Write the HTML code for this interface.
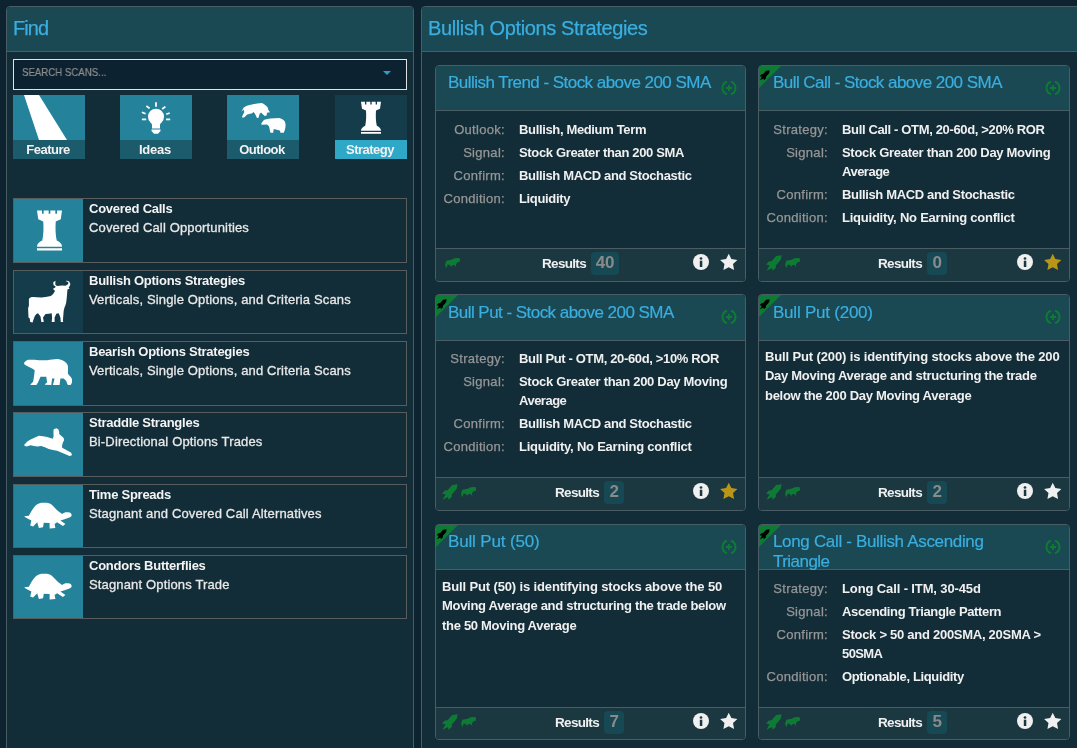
<!DOCTYPE html><html><head><meta charset="utf-8"><style>
html,body{margin:0;padding:0}
body{width:1077px;height:748px;overflow:hidden;background:#0d2330;position:relative;font-family:"Liberation Sans",sans-serif;}
.t{position:absolute;white-space:nowrap;will-change:transform;}
svg{display:block}
</style></head><body><div style="position:absolute;left:6px;top:6px;width:406px;height:760px;border:1px solid #4b5d64;border-radius:4px 4px 0 0;background:#122d38;"></div>
<div style="position:absolute;left:7px;top:7px;width:406px;height:44px;background:#1a4953;border-radius:3px 3px 0 0;"></div>
<div style="position:absolute;left:7px;top:51px;width:406px;height:1px;background:#4b5d64;"></div>
<div class="t" style="left:12.5px;top:16.07px;font-size:20px;line-height:24px;color:#3aaee0;font-weight:400;letter-spacing:-0.95px;-webkit-text-stroke:0.25px #3aaee0;">Find</div>
<div style="position:absolute;left:13px;top:59px;width:392px;height:29px;border:1px solid #dfe3e6;background:#0d2230;"></div>
<div class="t" style="left:22.2px;top:64.72px;font-size:11.5px;line-height:14px;color:#8f8f8f;font-weight:400;letter-spacing:0px;transform:scaleX(0.84);transform-origin:0 0;-webkit-text-stroke:0.2px #8f8f8f;">SEARCH SCANS...</div>
<svg style="position:absolute;left:383px;top:71px" width="8" height="4" viewBox="0 0 8 4"><path d="M0,0H8L4,4Z" fill="#2d9fc2"/></svg>
<div style="position:absolute;left:13px;top:95px;width:72px;height:45px;background:#24839b;"></div>
<div style="position:absolute;left:13px;top:140px;width:72px;height:19px;background:#1c5b6c;"></div>
<div class="t" style="left:-151.7px;width:400px;text-align:center;top:141.50px;font-size:13px;line-height:16px;color:#f2f2f2;font-weight:700;letter-spacing:-0.5px;">Feature</div>
<div style="position:absolute;left:120px;top:95px;width:72px;height:45px;background:#24839b;"></div>
<div style="position:absolute;left:120px;top:140px;width:72px;height:19px;background:#1c5b6c;"></div>
<div class="t" style="left:-44.69999999999999px;width:400px;text-align:center;top:141.50px;font-size:13px;line-height:16px;color:#f2f2f2;font-weight:700;letter-spacing:-0.2px;">Ideas</div>
<div style="position:absolute;left:227px;top:95px;width:72px;height:45px;background:#24839b;"></div>
<div style="position:absolute;left:227px;top:140px;width:72px;height:19px;background:#1c5b6c;"></div>
<div class="t" style="left:62.30000000000001px;width:400px;text-align:center;top:141.50px;font-size:13px;line-height:16px;color:#f2f2f2;font-weight:700;letter-spacing:-0.5px;">Outlook</div>
<div style="position:absolute;left:335px;top:95px;width:72px;height:45px;background:#143c4a;"></div>
<div style="position:absolute;left:335px;top:140px;width:72px;height:19px;background:#2fa7c7;"></div>
<div class="t" style="left:170.3px;width:400px;text-align:center;top:141.50px;font-size:13px;line-height:16px;color:#f2f2f2;font-weight:700;letter-spacing:-0.5px;">Strategy</div>
<svg style="position:absolute;left:13px;top:95px" width="72" height="45" viewBox="0 0 72 45"><path d="M11,0H26L54,45H26Z" fill="#fff"/></svg>
<svg style="position:absolute;left:120px;top:95px" width="72" height="45" viewBox="0 0 72 45"><g fill="#fff"><circle cx="36" cy="21.7" r="8"/><path d="M29.5,25.5Q31.5,28 32,29.7V33.6H40V29.7Q40.5,28 42.5,25.5Z"/><path d="M31.5,34.6H40.5V36L38,38.8H34L31.5,36Z"/></g><g stroke="#fff" stroke-width="1.75" stroke-linecap="butt"><path d="M36,7.3V11.8"/><path d="M26.4,11L29.6,13.4"/><path d="M45.4,11.6L42.2,14"/><path d="M21.9,17.2L25.6,18.8"/><path d="M49.7,18L46.2,19.3"/><path d="M21.9,24.4H26.2"/><path d="M46,24.4H50.2"/></g></svg>
<svg style="position:absolute;left:227px;top:95px" width="72" height="45" viewBox="0 0 72 45"><path fill="#fff" d="M14.3,16.8L16.6,12.7L18.4,11.4C19,10.9 19.8,10.6 20.7,10.4L25.9,9.3L30.3,8.4L34.8,8C36,8.5 37,9 37.8,9.7C39,10.5 39.8,11.2 40.4,11.9C40.9,13 41.2,14.1 41.5,15.3L43,17.3L40,17.7L39.6,20.5L37.8,21L36.3,19.7L34,17.5L32.6,19L31.4,23.1L30,23.1L28.1,19L26.6,17.1L25.1,18.2L20.3,19.4L17.3,22.3L15.5,22.7L15.1,21.6L17.3,17.1L16.6,14.5Z"/><path fill="#fff" d="M34.1,29.1C35,27.3 36,25.7 37.4,24.7C39.3,23.9 41.3,23.5 43.4,23.4L52.1,23.1C54.5,23.7 56.3,24.7 57.5,26.1C58.5,27.8 58.7,29.6 58.5,31.4C58.3,33.5 57.6,35.8 56.8,37.8L53.5,37.8L52.8,35.4L46.8,34.1L46.1,37.8L43.4,37.8L42.1,31.4L40.1,29.4L34.8,29.7Z"/></svg>
<svg style="position:absolute;left:335px;top:95px" width="72" height="45" viewBox="0 0 72 45"><g transform="translate(26,6.8)"><path fill="#fff" d="M0,0H4V2.6H5.33V0H9.33V2.6H10.67V0H14.67V2.6H16V0H20L19,7L15,8.8C14.6,14 14.8,20 15.8,24C18.6,25.2 20,26.8 20,29H0C0,26.8 1.4,25.2 4.2,24C5.2,20 5.4,14 5,8.8L1,7Z M0,30.2H20V32H0Z"/></g></svg>
<div style="position:absolute;left:13px;top:198px;width:392px;height:63px;border:1px solid #595c5c;background:#122d38;"></div>
<div style="position:absolute;left:14px;top:199px;width:69px;height:63px;background:#24839b;"></div>
<div class="t" style="left:89.2px;top:200.70px;font-size:13px;line-height:16px;color:#f4f4f4;font-weight:700;letter-spacing:-0.25px;">Covered Calls</div>
<div class="t" style="left:89.2px;top:220.30px;font-size:13px;line-height:16px;color:#e8e8e8;font-weight:400;letter-spacing:0.15px;-webkit-text-stroke:0.3px #e8e8e8;">Covered Call Opportunities</div>
<svg style="position:absolute;left:14px;top:199px" width="69" height="63" viewBox="0 0 69 63"><g transform="translate(23,11.5) scale(1.25)"><path fill="#fff" d="M0,0H4V2.6H5.33V0H9.33V2.6H10.67V0H14.67V2.6H16V0H20L19,7L15,8.8C14.6,14 14.8,20 15.8,24C18.6,25.2 20,26.8 20,29H0C0,26.8 1.4,25.2 4.2,24C5.2,20 5.4,14 5,8.8L1,7Z M0,30.2H20V32H0Z"/></g></svg>
<div style="position:absolute;left:13px;top:270px;width:392px;height:62px;border:1px solid #595c5c;background:#122d38;"></div>
<div style="position:absolute;left:14px;top:271px;width:69px;height:62px;background:#143c4a;"></div>
<div class="t" style="left:89.2px;top:272.70px;font-size:13px;line-height:16px;color:#f4f4f4;font-weight:700;letter-spacing:-0.25px;">Bullish Options Strategies</div>
<div class="t" style="left:89.2px;top:292.30px;font-size:13px;line-height:16px;color:#e8e8e8;font-weight:400;letter-spacing:0.15px;-webkit-text-stroke:0.3px #e8e8e8;">Verticals, Single Options, and Criteria Scans</div>
<svg style="position:absolute;left:14px;top:271px" width="69" height="63" viewBox="0 0 69 63"><path fill="#fff" d="M15.3,27.3C16.5,26.5 17.5,26.2 19,26.1L27.3,26.5C30,26.2 33,25.8 35.6,25.3C37,24.8 38.2,24 38.9,23.2C39.8,22 40.5,21 41,19.9L38.9,17.8L40.6,17L41.8,15.7C40.5,15 39.5,14.3 39.4,13.3C39.2,12 39.4,11 39.8,10.8L41.8,9.9C41.3,10.8 41.2,11.5 41.4,11.6C41.2,12.5 41.3,13.2 41.4,13.7C42,14.3 42.6,14.7 43.1,14.9L48.1,14.5L51.4,14.7C52.3,14.4 53.3,13.9 53.9,13.3C54.4,12.5 54.4,11.8 54.3,11.2L51.8,9.9C53.3,9.8 54.5,10 55.1,10.4C56,11.3 56.4,12.3 56.3,13.3C56.1,14.5 55.5,15.5 54.7,16.2L55.5,17.8L53.4,18.6C53.3,20.5 53.2,22.3 53,24C52.8,26.5 52.6,29 52.2,31.5C51.8,33.5 51.2,35 50.5,36.5L49.7,39.8L48.9,49.7L49.3,51L46.8,51L46.4,46.4L44.7,42.3L42.3,42.7L40.6,46.4L40.6,51L37.7,51L38.1,46.4L37.7,42.3L34.8,42.7L31.5,43.1L29,46.4L29.8,51L27.3,51L26.5,45.6L24,42.3L22.4,43.1L20.7,45.2L19.1,49.7L18.6,51.4L16.2,51L15.7,47.2L14.5,46.4L14.1,37.3L14.9,34.8L14.9,28.2Z"/></svg>
<div style="position:absolute;left:13px;top:341px;width:392px;height:63px;border:1px solid #595c5c;background:#122d38;"></div>
<div style="position:absolute;left:14px;top:342px;width:69px;height:63px;background:#24839b;"></div>
<div class="t" style="left:89.2px;top:343.70px;font-size:13px;line-height:16px;color:#f4f4f4;font-weight:700;letter-spacing:-0.25px;">Bearish Options Strategies</div>
<div class="t" style="left:89.2px;top:363.30px;font-size:13px;line-height:16px;color:#e8e8e8;font-weight:400;letter-spacing:0.15px;-webkit-text-stroke:0.3px #e8e8e8;">Verticals, Single Options, and Criteria Scans</div>
<svg style="position:absolute;left:14px;top:342px" width="69" height="63" viewBox="0 0 69 63"><path fill="#fff" d="M9.9,21.1C11,19.5 12.5,18 14.1,17.8L20.7,17.8C25,18.3 29,18.5 33.1,18.2C37,17.8 40,17 43.1,17C46,17.2 48,18 49.7,19.1C52,20.5 53.5,22 53.9,24C54.2,27 53.8,29.5 53.9,31.5C54.5,33 56,34.2 57.2,35.6C58.2,37 58.2,39 58,39.8C57.8,41.5 57,43 56.3,43.1L53.9,43.1C53,41.5 52.8,40 52.2,38.9L49.7,36.5L46.4,36.5L45.6,43.1L38.9,43.1C39.5,41 40,38.5 40.6,36.5L38.1,36.5L37.3,43.1L30.7,42.7C31.5,41.8 32.5,41 33.1,40.6L32.3,34.8L26.5,34.8L24,40.6L22.4,43.1L16.2,43.1C17,41.8 18.2,40.8 19.1,39.8C20,35 20.5,31 20.7,28.2C19.2,27 18,26.2 16.6,25.7C14.5,24.8 12.5,23.8 10.8,22.8Z"/></svg>
<div style="position:absolute;left:13px;top:412px;width:392px;height:63px;border:1px solid #595c5c;background:#122d38;"></div>
<div style="position:absolute;left:14px;top:413px;width:69px;height:63px;background:#24839b;"></div>
<div class="t" style="left:89.2px;top:414.70px;font-size:13px;line-height:16px;color:#f4f4f4;font-weight:700;letter-spacing:-0.25px;">Straddle Strangles</div>
<div class="t" style="left:89.2px;top:434.30px;font-size:13px;line-height:16px;color:#e8e8e8;font-weight:400;letter-spacing:0.15px;-webkit-text-stroke:0.3px #e8e8e8;">Bi-Directional Options Trades</div>
<svg style="position:absolute;left:14px;top:413px" width="69" height="63" viewBox="0 0 69 63"><path fill="#fff" d="M10.4,31.5L13.3,28.6L16.6,26.5L19.9,24.9L24.9,22.8L29.0,23.2L33.1,24.0L38.9,25.7L39.6,23.2L39.4,18.2L39.8,16.2L42.3,15.3L44.3,16.2L45.2,19.1L45.2,21.1L47.2,22.8L49.7,24.9L50.1,27.3L48.9,29.4L48.1,32.3L48.1,34.8L51.4,36.5L57.2,39.8L58.0,42.3L55.5,43.1L49.7,40.6L43.1,37.7L38.9,36.9L34.8,36.0L31.5,34.4L27.3,33.1L23.2,33.6L19.9,33.1L16.6,32.3L12.4,33.6L10.4,32.7Z"/></svg>
<div style="position:absolute;left:13px;top:484px;width:392px;height:62px;border:1px solid #595c5c;background:#122d38;"></div>
<div style="position:absolute;left:14px;top:485px;width:69px;height:62px;background:#24839b;"></div>
<div class="t" style="left:89.2px;top:486.70px;font-size:13px;line-height:16px;color:#f4f4f4;font-weight:700;letter-spacing:-0.25px;">Time Spreads</div>
<div class="t" style="left:89.2px;top:506.30px;font-size:13px;line-height:16px;color:#e8e8e8;font-weight:400;letter-spacing:0.15px;-webkit-text-stroke:0.3px #e8e8e8;">Stagnant and Covered Call Alternatives</div>
<svg style="position:absolute;left:14px;top:485px" width="69" height="63" viewBox="0 0 69 63"><path fill="#fff" d="M10.4,31.3L14.9,30.7C16.5,27.5 18.5,24 20.7,21.5C22.5,19.5 25,18 27.3,17.8L33.1,17.8C35.5,18.3 37.5,19.3 38.9,20.7C40.8,22.8 42.8,25 44.7,26.5L48.1,29C49.2,28.2 50.2,27.6 51.4,27.3C53,27.2 54.8,27.3 56.3,27.8C57.3,28.5 57.7,29.6 57.6,30.7C57,31.8 55.8,32.4 54.7,32.7C52,33.6 49,34.6 46.4,35.6L51.4,38.9L48.9,41L43.1,37.3L40.6,38.9L41.4,43.1L35.6,43.5L35.6,38.1L29.8,37.7L29,42.3L24.9,43.1L23.2,37.3L19.1,41.4L16.2,40.6L17.4,35.6C15,34.3 12.8,33 10.8,31.9Z"/></svg>
<div style="position:absolute;left:13px;top:555px;width:392px;height:62px;border:1px solid #595c5c;background:#122d38;"></div>
<div style="position:absolute;left:14px;top:556px;width:69px;height:62px;background:#24839b;"></div>
<div class="t" style="left:89.2px;top:557.70px;font-size:13px;line-height:16px;color:#f4f4f4;font-weight:700;letter-spacing:-0.25px;">Condors Butterflies</div>
<div class="t" style="left:89.2px;top:577.30px;font-size:13px;line-height:16px;color:#e8e8e8;font-weight:400;letter-spacing:0.15px;-webkit-text-stroke:0.3px #e8e8e8;">Stagnant Options Trade</div>
<svg style="position:absolute;left:14px;top:556px" width="69" height="63" viewBox="0 0 69 63"><path fill="#fff" d="M10.4,31.3L14.9,30.7C16.5,27.5 18.5,24 20.7,21.5C22.5,19.5 25,18 27.3,17.8L33.1,17.8C35.5,18.3 37.5,19.3 38.9,20.7C40.8,22.8 42.8,25 44.7,26.5L48.1,29C49.2,28.2 50.2,27.6 51.4,27.3C53,27.2 54.8,27.3 56.3,27.8C57.3,28.5 57.7,29.6 57.6,30.7C57,31.8 55.8,32.4 54.7,32.7C52,33.6 49,34.6 46.4,35.6L51.4,38.9L48.9,41L43.1,37.3L40.6,38.9L41.4,43.1L35.6,43.5L35.6,38.1L29.8,37.7L29,42.3L24.9,43.1L23.2,37.3L19.1,41.4L16.2,40.6L17.4,35.6C15,34.3 12.8,33 10.8,31.9Z"/></svg>
<div style="position:absolute;left:421px;top:6px;width:700px;height:760px;border:1px solid #4b5d64;border-radius:4px 4px 0 0;background:#122d38;"></div>
<div style="position:absolute;left:422px;top:7px;width:700px;height:44px;background:#1a4953;border-radius:3px 0 0 0;"></div>
<div style="position:absolute;left:422px;top:51px;width:700px;height:1px;background:#4b5d64;"></div>
<div class="t" style="left:427.5px;top:16.07px;font-size:20px;line-height:24px;color:#3aaee0;font-weight:400;letter-spacing:-0.37px;-webkit-text-stroke:0.25px #3aaee0;">Bullish Options Strategies</div>
<div style="position:absolute;left:435px;top:65px;width:309px;height:215px;border:1px solid #4b5d64;border-radius:4px;overflow:hidden;background:#122d38;"><div style="position:absolute;left:0;top:0;width:309px;height:44px;background:#1a4953;border-bottom:1px solid #4b5d64;"></div><div style="position:absolute;left:0;top:182px;width:309px;height:33px;background:#1b3740;border-top:1px solid #4b5d64;"></div></div>
<div class="t" style="left:448.0px;top:73.11px;font-size:17px;line-height:20px;color:#3aaee0;font-weight:400;letter-spacing:-0.54px;-webkit-text-stroke:0.2px #3aaee0;">Bullish Trend - Stock above 200 SMA</div>
<svg style="position:absolute;left:720.4px;top:79.2px" width="18" height="18" viewBox="0 0 18 18"><g fill="none" stroke="#0e7b34" stroke-width="2"><path d="M7,2.82A6.5,6.5 0 0 0 7,15.18"/><path d="M11,2.82A6.5,6.5 0 0 1 11,15.18"/><path d="M9,6V12M6,9H12" stroke-width="1.8"/></g></svg>
<div class="t" style="left:104.80000000000001px;width:400px;text-align:right;top:121.50px;font-size:13px;line-height:16px;color:#969696;font-weight:400;letter-spacing:0.3px;-webkit-text-stroke:0.25px #969696;">Outlook:</div>
<div class="t" style="left:518.7px;top:121.50px;font-size:13px;line-height:16px;color:#f0f0f0;font-weight:700;letter-spacing:-0.35px;">Bullish, Medium Term</div>
<div class="t" style="left:104.80000000000001px;width:400px;text-align:right;top:144.50px;font-size:13px;line-height:16px;color:#969696;font-weight:400;letter-spacing:0.3px;-webkit-text-stroke:0.25px #969696;">Signal:</div>
<div class="t" style="left:518.7px;top:144.50px;font-size:13px;line-height:16px;color:#f0f0f0;font-weight:700;letter-spacing:-0.35px;">Stock Greater than 200 SMA</div>
<div class="t" style="left:104.80000000000001px;width:400px;text-align:right;top:167.50px;font-size:13px;line-height:16px;color:#969696;font-weight:400;letter-spacing:0.3px;-webkit-text-stroke:0.25px #969696;">Confirm:</div>
<div class="t" style="left:518.7px;top:167.50px;font-size:13px;line-height:16px;color:#f0f0f0;font-weight:700;letter-spacing:-0.35px;">Bullish MACD and Stochastic</div>
<div class="t" style="left:104.80000000000001px;width:400px;text-align:right;top:190.50px;font-size:13px;line-height:16px;color:#969696;font-weight:400;letter-spacing:0.3px;-webkit-text-stroke:0.25px #969696;">Condition:</div>
<div class="t" style="left:518.7px;top:190.50px;font-size:13px;line-height:16px;color:#f0f0f0;font-weight:700;letter-spacing:-0.35px;">Liquidity</div>
<svg style="position:absolute;left:441.6px;top:253.7px" width="20" height="16" viewBox="0 0 20 16"><path fill="#0e7b34" d="M4.3,6.7L9.6,5.8L12.5,4.3L16.4,4.1L17.3,3.9L18.1,5.8L17.8,7.7L15.7,8.2L14.5,9.6L13.7,11.3L14.7,12.3L13.5,12.5L12.5,11.1L10.1,11.3L9.6,12.5L8.9,12.5L7.5,10.8L5.5,10.8L4.8,13.5L3.9,13.5L3.1,10.6L3.9,8Z"/></svg>
<div class="t" style="left:542px;top:256.32px;font-size:13.5px;line-height:16px;color:#f0f0f0;font-weight:700;letter-spacing:-0.68px;">Results</div>
<div style="position:absolute;left:591px;top:252px;width:28px;height:23px;background:#174955;border-radius:4px;"></div>
<div class="t" style="left:405.0px;width:400px;text-align:center;top:253.11px;font-size:17px;line-height:20px;color:#8a8a8a;font-weight:700;letter-spacing:-0.3px;">40</div>
<svg style="position:absolute;left:693px;top:254px" width="16" height="16" viewBox="0 0 16 16"><circle cx="8" cy="8" r="8" fill="#f0f0f0"/><circle cx="8" cy="4.5" r="1.35" fill="#1b3740"/><rect x="6.8" y="6.7" width="2.5" height="6.3" fill="#1b3740"/></svg>
<svg style="position:absolute;left:720.3px;top:253.1px" width="17.5" height="17.5" viewBox="0 0 16 16"><path fill="#f0f0f0" d="M8.00,0.60L10.41,5.58L15.89,6.34L11.90,10.17L12.88,15.61L8.00,13.00L3.12,15.61L4.10,10.17L0.11,6.34L5.59,5.58Z"/></svg>
<div style="position:absolute;left:758px;top:65px;width:310px;height:215px;border:1px solid #4b5d64;border-radius:4px;overflow:hidden;background:#122d38;"><div style="position:absolute;left:0;top:0;width:310px;height:44px;background:#1a4953;border-bottom:1px solid #4b5d64;"></div><div style="position:absolute;left:0;top:182px;width:310px;height:33px;background:#1b3740;border-top:1px solid #4b5d64;"></div></div>
<svg style="position:absolute;left:759px;top:66px" width="22" height="22" viewBox="0 0 22 22"><path d="M0,0H22L0,22Z" fill="#0e7b34"/><g transform="translate(-3.2,-0.4) scale(0.64)"><path fill="#000" d="M21.6,7.2L20.9,11.6C19.2,13.8 17.5,15.8 15.8,17.6L15.8,20L12.5,22.7L12.1,20L6.5,22.7L9.5,17.5L6,16.5L8.8,13.5L11.6,13.2C13.2,11.3 14.7,9.6 16.2,8.1Z"/></g></svg>
<div class="t" style="left:772.5px;top:73.11px;font-size:17px;line-height:20px;color:#3aaee0;font-weight:400;letter-spacing:-0.54px;-webkit-text-stroke:0.2px #3aaee0;">Bull Call - Stock above 200 SMA</div>
<svg style="position:absolute;left:1044.4px;top:79.2px" width="18" height="18" viewBox="0 0 18 18"><g fill="none" stroke="#0e7b34" stroke-width="2"><path d="M7,2.82A6.5,6.5 0 0 0 7,15.18"/><path d="M11,2.82A6.5,6.5 0 0 1 11,15.18"/><path d="M9,6V12M6,9H12" stroke-width="1.8"/></g></svg>
<div class="t" style="left:427.79999999999995px;width:400px;text-align:right;top:121.50px;font-size:13px;line-height:16px;color:#969696;font-weight:400;letter-spacing:0.3px;-webkit-text-stroke:0.25px #969696;">Strategy:</div>
<div class="t" style="left:841.7px;top:121.50px;font-size:13px;line-height:16px;color:#f0f0f0;font-weight:700;letter-spacing:-0.35px;">Bull Call - OTM, 20-60d, &gt;20% ROR</div>
<div class="t" style="left:427.79999999999995px;width:400px;text-align:right;top:144.50px;font-size:13px;line-height:16px;color:#969696;font-weight:400;letter-spacing:0.3px;-webkit-text-stroke:0.25px #969696;">Signal:</div>
<div class="t" style="left:841.7px;top:144.50px;font-size:13px;line-height:16px;color:#f0f0f0;font-weight:700;letter-spacing:-0.3px;">Stock Greater than 200 Day Moving</div>
<div class="t" style="left:841.7px;top:164.00px;font-size:13px;line-height:16px;color:#f0f0f0;font-weight:700;letter-spacing:-0.5px;">Average</div>
<div class="t" style="left:427.79999999999995px;width:400px;text-align:right;top:187.00px;font-size:13px;line-height:16px;color:#969696;font-weight:400;letter-spacing:0.3px;-webkit-text-stroke:0.25px #969696;">Confirm:</div>
<div class="t" style="left:841.7px;top:187.00px;font-size:13px;line-height:16px;color:#f0f0f0;font-weight:700;letter-spacing:-0.35px;">Bullish MACD and Stochastic</div>
<div class="t" style="left:427.79999999999995px;width:400px;text-align:right;top:210.00px;font-size:13px;line-height:16px;color:#969696;font-weight:400;letter-spacing:0.3px;-webkit-text-stroke:0.25px #969696;">Condition:</div>
<div class="t" style="left:841.7px;top:210.00px;font-size:13px;line-height:16px;color:#f0f0f0;font-weight:700;letter-spacing:-0.22999999999999998px;">Liquidity, No Earning conflict</div>
<svg style="position:absolute;left:760px;top:248px" width="22" height="26" viewBox="0 0 22 26"><path fill="#0e7b34" d="M21.6,7.2L20.9,11.6C19.2,13.8 17.5,15.8 15.8,17.6L15.8,20L12.5,22.7L12.1,20L6.5,22.7L9.5,17.5L6,16.5L8.8,13.5L11.6,13.2C13.2,11.3 14.7,9.6 16.2,8.1Z"/></svg>
<svg style="position:absolute;left:782.3px;top:254px" width="20" height="16" viewBox="0 0 20 16"><path fill="#0e7b34" d="M4.3,6.7L9.6,5.8L12.5,4.3L16.4,4.1L17.3,3.9L18.1,5.8L17.8,7.7L15.7,8.2L14.5,9.6L13.7,11.3L14.7,12.3L13.5,12.5L12.5,11.1L10.1,11.3L9.6,12.5L8.9,12.5L7.5,10.8L5.5,10.8L4.8,13.5L3.9,13.5L3.1,10.6L3.9,8Z"/></svg>
<div class="t" style="left:878px;top:256.32px;font-size:13.5px;line-height:16px;color:#f0f0f0;font-weight:700;letter-spacing:-0.68px;">Results</div>
<div style="position:absolute;left:927px;top:252px;width:19.5px;height:23px;background:#174955;border-radius:4px;"></div>
<div class="t" style="left:736.75px;width:400px;text-align:center;top:253.11px;font-size:17px;line-height:20px;color:#8a8a8a;font-weight:700;letter-spacing:-0.3px;">0</div>
<svg style="position:absolute;left:1017px;top:254px" width="16" height="16" viewBox="0 0 16 16"><circle cx="8" cy="8" r="8" fill="#f0f0f0"/><circle cx="8" cy="4.5" r="1.35" fill="#1b3740"/><rect x="6.8" y="6.7" width="2.5" height="6.3" fill="#1b3740"/></svg>
<svg style="position:absolute;left:1044.3px;top:253.1px" width="17.5" height="17.5" viewBox="0 0 16 16"><path fill="#b99618" d="M8.00,0.60L10.41,5.58L15.89,6.34L11.90,10.17L12.88,15.61L8.00,13.00L3.12,15.61L4.10,10.17L0.11,6.34L5.59,5.58Z"/></svg>
<div style="position:absolute;left:435px;top:294px;width:309px;height:215px;border:1px solid #4b5d64;border-radius:4px;overflow:hidden;background:#122d38;"><div style="position:absolute;left:0;top:0;width:309px;height:45px;background:#1a4953;border-bottom:1px solid #4b5d64;"></div><div style="position:absolute;left:0;top:182px;width:309px;height:33px;background:#1b3740;border-top:1px solid #4b5d64;"></div></div>
<svg style="position:absolute;left:436px;top:295px" width="22" height="22" viewBox="0 0 22 22"><path d="M0,0H22L0,22Z" fill="#0e7b34"/><g transform="translate(-3.2,-0.4) scale(0.64)"><path fill="#000" d="M21.6,7.2L20.9,11.6C19.2,13.8 17.5,15.8 15.8,17.6L15.8,20L12.5,22.7L12.1,20L6.5,22.7L9.5,17.5L6,16.5L8.8,13.5L11.6,13.2C13.2,11.3 14.7,9.6 16.2,8.1Z"/></g></svg>
<div class="t" style="left:448.0px;top:302.61px;font-size:17px;line-height:20px;color:#3aaee0;font-weight:400;letter-spacing:-0.54px;-webkit-text-stroke:0.2px #3aaee0;">Bull Put - Stock above 200 SMA</div>
<svg style="position:absolute;left:720.4px;top:308.2px" width="18" height="18" viewBox="0 0 18 18"><g fill="none" stroke="#0e7b34" stroke-width="2"><path d="M7,2.82A6.5,6.5 0 0 0 7,15.18"/><path d="M11,2.82A6.5,6.5 0 0 1 11,15.18"/><path d="M9,6V12M6,9H12" stroke-width="1.8"/></g></svg>
<div class="t" style="left:104.80000000000001px;width:400px;text-align:right;top:350.50px;font-size:13px;line-height:16px;color:#969696;font-weight:400;letter-spacing:0.3px;-webkit-text-stroke:0.25px #969696;">Strategy:</div>
<div class="t" style="left:518.7px;top:350.50px;font-size:13px;line-height:16px;color:#f0f0f0;font-weight:700;letter-spacing:-0.35px;">Bull Put - OTM, 20-60d, &gt;10% ROR</div>
<div class="t" style="left:104.80000000000001px;width:400px;text-align:right;top:373.50px;font-size:13px;line-height:16px;color:#969696;font-weight:400;letter-spacing:0.3px;-webkit-text-stroke:0.25px #969696;">Signal:</div>
<div class="t" style="left:518.7px;top:373.50px;font-size:13px;line-height:16px;color:#f0f0f0;font-weight:700;letter-spacing:-0.3px;">Stock Greater than 200 Day Moving</div>
<div class="t" style="left:518.7px;top:393.00px;font-size:13px;line-height:16px;color:#f0f0f0;font-weight:700;letter-spacing:-0.5px;">Average</div>
<div class="t" style="left:104.80000000000001px;width:400px;text-align:right;top:416.00px;font-size:13px;line-height:16px;color:#969696;font-weight:400;letter-spacing:0.3px;-webkit-text-stroke:0.25px #969696;">Confirm:</div>
<div class="t" style="left:518.7px;top:416.00px;font-size:13px;line-height:16px;color:#f0f0f0;font-weight:700;letter-spacing:-0.35px;">Bullish MACD and Stochastic</div>
<div class="t" style="left:104.80000000000001px;width:400px;text-align:right;top:439.00px;font-size:13px;line-height:16px;color:#969696;font-weight:400;letter-spacing:0.3px;-webkit-text-stroke:0.25px #969696;">Condition:</div>
<div class="t" style="left:518.7px;top:439.00px;font-size:13px;line-height:16px;color:#f0f0f0;font-weight:700;letter-spacing:-0.22999999999999998px;">Liquidity, No Earning conflict</div>
<svg style="position:absolute;left:436px;top:477px" width="22" height="26" viewBox="0 0 22 26"><path fill="#0e7b34" d="M21.6,7.2L20.9,11.6C19.2,13.8 17.5,15.8 15.8,17.6L15.8,20L12.5,22.7L12.1,20L6.5,22.7L9.5,17.5L6,16.5L8.8,13.5L11.6,13.2C13.2,11.3 14.7,9.6 16.2,8.1Z"/></svg>
<svg style="position:absolute;left:458.0px;top:483px" width="20" height="16" viewBox="0 0 20 16"><path fill="#0e7b34" d="M4.3,6.7L9.6,5.8L12.5,4.3L16.4,4.1L17.3,3.9L18.1,5.8L17.8,7.7L15.7,8.2L14.5,9.6L13.7,11.3L14.7,12.3L13.5,12.5L12.5,11.1L10.1,11.3L9.6,12.5L8.9,12.5L7.5,10.8L5.5,10.8L4.8,13.5L3.9,13.5L3.1,10.6L3.9,8Z"/></svg>
<div class="t" style="left:555px;top:485.32px;font-size:13.5px;line-height:16px;color:#f0f0f0;font-weight:700;letter-spacing:-0.68px;">Results</div>
<div style="position:absolute;left:604px;top:481px;width:19.5px;height:23px;background:#174955;border-radius:4px;"></div>
<div class="t" style="left:413.75px;width:400px;text-align:center;top:482.11px;font-size:17px;line-height:20px;color:#8a8a8a;font-weight:700;letter-spacing:-0.3px;">2</div>
<svg style="position:absolute;left:693px;top:483px" width="16" height="16" viewBox="0 0 16 16"><circle cx="8" cy="8" r="8" fill="#f0f0f0"/><circle cx="8" cy="4.5" r="1.35" fill="#1b3740"/><rect x="6.8" y="6.7" width="2.5" height="6.3" fill="#1b3740"/></svg>
<svg style="position:absolute;left:720.3px;top:482.1px" width="17.5" height="17.5" viewBox="0 0 16 16"><path fill="#b99618" d="M8.00,0.60L10.41,5.58L15.89,6.34L11.90,10.17L12.88,15.61L8.00,13.00L3.12,15.61L4.10,10.17L0.11,6.34L5.59,5.58Z"/></svg>
<div style="position:absolute;left:758px;top:294px;width:310px;height:215px;border:1px solid #4b5d64;border-radius:4px;overflow:hidden;background:#122d38;"><div style="position:absolute;left:0;top:0;width:310px;height:45px;background:#1a4953;border-bottom:1px solid #4b5d64;"></div><div style="position:absolute;left:0;top:182px;width:310px;height:33px;background:#1b3740;border-top:1px solid #4b5d64;"></div></div>
<svg style="position:absolute;left:759px;top:295px" width="22" height="22" viewBox="0 0 22 22"><path d="M0,0H22L0,22Z" fill="#0e7b34"/><g transform="translate(-3.2,-0.4) scale(0.64)"><path fill="#000" d="M21.6,7.2L20.9,11.6C19.2,13.8 17.5,15.8 15.8,17.6L15.8,20L12.5,22.7L12.1,20L6.5,22.7L9.5,17.5L6,16.5L8.8,13.5L11.6,13.2C13.2,11.3 14.7,9.6 16.2,8.1Z"/></g></svg>
<div class="t" style="left:772.5px;top:302.61px;font-size:17px;line-height:20px;color:#3aaee0;font-weight:400;letter-spacing:-0.23000000000000004px;-webkit-text-stroke:0.2px #3aaee0;">Bull Put (200)</div>
<svg style="position:absolute;left:1044.4px;top:308.2px" width="18" height="18" viewBox="0 0 18 18"><g fill="none" stroke="#0e7b34" stroke-width="2"><path d="M7,2.82A6.5,6.5 0 0 0 7,15.18"/><path d="M11,2.82A6.5,6.5 0 0 1 11,15.18"/><path d="M9,6V12M6,9H12" stroke-width="1.8"/></g></svg>
<div class="t" style="left:765.3px;top:348.50px;font-size:13px;line-height:16px;color:#f0f0f0;font-weight:700;letter-spacing:-0.135px;">Bull Put (200) is identifying stocks above the 200</div>
<div class="t" style="left:765.3px;top:368.00px;font-size:13px;line-height:16px;color:#f0f0f0;font-weight:700;letter-spacing:-0.28900000000000003px;">Day Moving Average and structuring the trade</div>
<div class="t" style="left:765.3px;top:387.50px;font-size:13px;line-height:16px;color:#f0f0f0;font-weight:700;letter-spacing:-0.29400000000000004px;">below the 200 Day Moving Average</div>
<svg style="position:absolute;left:760px;top:477px" width="22" height="26" viewBox="0 0 22 26"><path fill="#0e7b34" d="M21.6,7.2L20.9,11.6C19.2,13.8 17.5,15.8 15.8,17.6L15.8,20L12.5,22.7L12.1,20L6.5,22.7L9.5,17.5L6,16.5L8.8,13.5L11.6,13.2C13.2,11.3 14.7,9.6 16.2,8.1Z"/></svg>
<svg style="position:absolute;left:782.3px;top:483px" width="20" height="16" viewBox="0 0 20 16"><path fill="#0e7b34" d="M4.3,6.7L9.6,5.8L12.5,4.3L16.4,4.1L17.3,3.9L18.1,5.8L17.8,7.7L15.7,8.2L14.5,9.6L13.7,11.3L14.7,12.3L13.5,12.5L12.5,11.1L10.1,11.3L9.6,12.5L8.9,12.5L7.5,10.8L5.5,10.8L4.8,13.5L3.9,13.5L3.1,10.6L3.9,8Z"/></svg>
<div class="t" style="left:878px;top:485.32px;font-size:13.5px;line-height:16px;color:#f0f0f0;font-weight:700;letter-spacing:-0.68px;">Results</div>
<div style="position:absolute;left:927px;top:481px;width:19.5px;height:23px;background:#174955;border-radius:4px;"></div>
<div class="t" style="left:736.75px;width:400px;text-align:center;top:482.11px;font-size:17px;line-height:20px;color:#8a8a8a;font-weight:700;letter-spacing:-0.3px;">2</div>
<svg style="position:absolute;left:1017px;top:483px" width="16" height="16" viewBox="0 0 16 16"><circle cx="8" cy="8" r="8" fill="#f0f0f0"/><circle cx="8" cy="4.5" r="1.35" fill="#1b3740"/><rect x="6.8" y="6.7" width="2.5" height="6.3" fill="#1b3740"/></svg>
<svg style="position:absolute;left:1044.3px;top:482.1px" width="17.5" height="17.5" viewBox="0 0 16 16"><path fill="#f0f0f0" d="M8.00,0.60L10.41,5.58L15.89,6.34L11.90,10.17L12.88,15.61L8.00,13.00L3.12,15.61L4.10,10.17L0.11,6.34L5.59,5.58Z"/></svg>
<div style="position:absolute;left:435px;top:524px;width:309px;height:214px;border:1px solid #4b5d64;border-radius:4px;overflow:hidden;background:#122d38;"><div style="position:absolute;left:0;top:0;width:309px;height:44px;background:#1a4953;border-bottom:1px solid #4b5d64;"></div><div style="position:absolute;left:0;top:182px;width:309px;height:32px;background:#1b3740;border-top:1px solid #4b5d64;"></div></div>
<svg style="position:absolute;left:436px;top:525px" width="22" height="22" viewBox="0 0 22 22"><path d="M0,0H22L0,22Z" fill="#0e7b34"/><g transform="translate(-3.2,-0.4) scale(0.64)"><path fill="#000" d="M21.6,7.2L20.9,11.6C19.2,13.8 17.5,15.8 15.8,17.6L15.8,20L12.5,22.7L12.1,20L6.5,22.7L9.5,17.5L6,16.5L8.8,13.5L11.6,13.2C13.2,11.3 14.7,9.6 16.2,8.1Z"/></g></svg>
<div class="t" style="left:448.0px;top:532.11px;font-size:17px;line-height:20px;color:#3aaee0;font-weight:400;letter-spacing:-0.15000000000000002px;-webkit-text-stroke:0.2px #3aaee0;">Bull Put (50)</div>
<svg style="position:absolute;left:720.4px;top:538.2px" width="18" height="18" viewBox="0 0 18 18"><g fill="none" stroke="#0e7b34" stroke-width="2"><path d="M7,2.82A6.5,6.5 0 0 0 7,15.18"/><path d="M11,2.82A6.5,6.5 0 0 1 11,15.18"/><path d="M9,6V12M6,9H12" stroke-width="1.8"/></g></svg>
<div class="t" style="left:441.5px;top:578.50px;font-size:13px;line-height:16px;color:#f0f0f0;font-weight:700;letter-spacing:-0.14px;">Bull Put (50) is identifying stocks above the 50</div>
<div class="t" style="left:441.5px;top:598.00px;font-size:13px;line-height:16px;color:#f0f0f0;font-weight:700;letter-spacing:-0.29400000000000004px;">Moving Average and structuring the trade below</div>
<div class="t" style="left:441.5px;top:617.50px;font-size:13px;line-height:16px;color:#f0f0f0;font-weight:700;letter-spacing:-0.30000000000000004px;">the 50 Moving Average</div>
<svg style="position:absolute;left:436px;top:707px" width="22" height="26" viewBox="0 0 22 26"><path fill="#0e7b34" d="M21.6,7.2L20.9,11.6C19.2,13.8 17.5,15.8 15.8,17.6L15.8,20L12.5,22.7L12.1,20L6.5,22.7L9.5,17.5L6,16.5L8.8,13.5L11.6,13.2C13.2,11.3 14.7,9.6 16.2,8.1Z"/></svg>
<svg style="position:absolute;left:458.0px;top:713px" width="20" height="16" viewBox="0 0 20 16"><path fill="#0e7b34" d="M4.3,6.7L9.6,5.8L12.5,4.3L16.4,4.1L17.3,3.9L18.1,5.8L17.8,7.7L15.7,8.2L14.5,9.6L13.7,11.3L14.7,12.3L13.5,12.5L12.5,11.1L10.1,11.3L9.6,12.5L8.9,12.5L7.5,10.8L5.5,10.8L4.8,13.5L3.9,13.5L3.1,10.6L3.9,8Z"/></svg>
<div class="t" style="left:555px;top:715.32px;font-size:13.5px;line-height:16px;color:#f0f0f0;font-weight:700;letter-spacing:-0.68px;">Results</div>
<div style="position:absolute;left:604px;top:711px;width:19.5px;height:23px;background:#174955;border-radius:4px;"></div>
<div class="t" style="left:413.75px;width:400px;text-align:center;top:712.11px;font-size:17px;line-height:20px;color:#8a8a8a;font-weight:700;letter-spacing:-0.3px;">7</div>
<svg style="position:absolute;left:693px;top:713px" width="16" height="16" viewBox="0 0 16 16"><circle cx="8" cy="8" r="8" fill="#f0f0f0"/><circle cx="8" cy="4.5" r="1.35" fill="#1b3740"/><rect x="6.8" y="6.7" width="2.5" height="6.3" fill="#1b3740"/></svg>
<svg style="position:absolute;left:720.3px;top:712.1px" width="17.5" height="17.5" viewBox="0 0 16 16"><path fill="#f0f0f0" d="M8.00,0.60L10.41,5.58L15.89,6.34L11.90,10.17L12.88,15.61L8.00,13.00L3.12,15.61L4.10,10.17L0.11,6.34L5.59,5.58Z"/></svg>
<div style="position:absolute;left:758px;top:524px;width:310px;height:214px;border:1px solid #4b5d64;border-radius:4px;overflow:hidden;background:#122d38;"><div style="position:absolute;left:0;top:0;width:310px;height:44px;background:#1a4953;border-bottom:1px solid #4b5d64;"></div><div style="position:absolute;left:0;top:182px;width:310px;height:32px;background:#1b3740;border-top:1px solid #4b5d64;"></div></div>
<svg style="position:absolute;left:759px;top:525px" width="22" height="22" viewBox="0 0 22 22"><path d="M0,0H22L0,22Z" fill="#0e7b34"/><g transform="translate(-3.2,-0.4) scale(0.64)"><path fill="#000" d="M21.6,7.2L20.9,11.6C19.2,13.8 17.5,15.8 15.8,17.6L15.8,20L12.5,22.7L12.1,20L6.5,22.7L9.5,17.5L6,16.5L8.8,13.5L11.6,13.2C13.2,11.3 14.7,9.6 16.2,8.1Z"/></g></svg>
<div class="t" style="left:772.5px;top:532.11px;font-size:17px;line-height:20px;color:#3aaee0;font-weight:400;letter-spacing:-0.33000000000000007px;-webkit-text-stroke:0.2px #3aaee0;">Long Call - Bullish Ascending</div>
<div class="t" style="left:772.5px;top:552.11px;font-size:17px;line-height:20px;color:#3aaee0;font-weight:400;letter-spacing:-0.54px;-webkit-text-stroke:0.2px #3aaee0;">Triangle</div>
<svg style="position:absolute;left:1044.4px;top:538.2px" width="18" height="18" viewBox="0 0 18 18"><g fill="none" stroke="#0e7b34" stroke-width="2"><path d="M7,2.82A6.5,6.5 0 0 0 7,15.18"/><path d="M11,2.82A6.5,6.5 0 0 1 11,15.18"/><path d="M9,6V12M6,9H12" stroke-width="1.8"/></g></svg>
<div class="t" style="left:427.79999999999995px;width:400px;text-align:right;top:580.50px;font-size:13px;line-height:16px;color:#969696;font-weight:400;letter-spacing:0.3px;-webkit-text-stroke:0.25px #969696;">Strategy:</div>
<div class="t" style="left:841.7px;top:580.50px;font-size:13px;line-height:16px;color:#f0f0f0;font-weight:700;letter-spacing:-0.11999999999999997px;">Long Call - ITM, 30-45d</div>
<div class="t" style="left:427.79999999999995px;width:400px;text-align:right;top:603.50px;font-size:13px;line-height:16px;color:#969696;font-weight:400;letter-spacing:0.3px;-webkit-text-stroke:0.25px #969696;">Signal:</div>
<div class="t" style="left:841.7px;top:603.50px;font-size:13px;line-height:16px;color:#f0f0f0;font-weight:700;letter-spacing:-0.35px;">Ascending Triangle Pattern</div>
<div class="t" style="left:427.79999999999995px;width:400px;text-align:right;top:626.50px;font-size:13px;line-height:16px;color:#969696;font-weight:400;letter-spacing:0.3px;-webkit-text-stroke:0.25px #969696;">Confirm:</div>
<div class="t" style="left:841.7px;top:626.50px;font-size:13px;line-height:16px;color:#f0f0f0;font-weight:700;letter-spacing:-0.26999999999999996px;">Stock &gt; 50 and 200SMA, 20SMA &gt;</div>
<div class="t" style="left:841.7px;top:646.00px;font-size:13px;line-height:16px;color:#f0f0f0;font-weight:700;letter-spacing:-0.6px;">50SMA</div>
<div class="t" style="left:427.79999999999995px;width:400px;text-align:right;top:669.00px;font-size:13px;line-height:16px;color:#969696;font-weight:400;letter-spacing:0.3px;-webkit-text-stroke:0.25px #969696;">Condition:</div>
<div class="t" style="left:841.7px;top:669.00px;font-size:13px;line-height:16px;color:#f0f0f0;font-weight:700;letter-spacing:-0.35px;">Optionable, Liquidity</div>
<svg style="position:absolute;left:760px;top:707px" width="22" height="26" viewBox="0 0 22 26"><path fill="#0e7b34" d="M21.6,7.2L20.9,11.6C19.2,13.8 17.5,15.8 15.8,17.6L15.8,20L12.5,22.7L12.1,20L6.5,22.7L9.5,17.5L6,16.5L8.8,13.5L11.6,13.2C13.2,11.3 14.7,9.6 16.2,8.1Z"/></svg>
<svg style="position:absolute;left:782.3px;top:713px" width="20" height="16" viewBox="0 0 20 16"><path fill="#0e7b34" d="M4.3,6.7L9.6,5.8L12.5,4.3L16.4,4.1L17.3,3.9L18.1,5.8L17.8,7.7L15.7,8.2L14.5,9.6L13.7,11.3L14.7,12.3L13.5,12.5L12.5,11.1L10.1,11.3L9.6,12.5L8.9,12.5L7.5,10.8L5.5,10.8L4.8,13.5L3.9,13.5L3.1,10.6L3.9,8Z"/></svg>
<div class="t" style="left:878px;top:715.32px;font-size:13.5px;line-height:16px;color:#f0f0f0;font-weight:700;letter-spacing:-0.68px;">Results</div>
<div style="position:absolute;left:927px;top:711px;width:19.5px;height:23px;background:#174955;border-radius:4px;"></div>
<div class="t" style="left:736.75px;width:400px;text-align:center;top:712.11px;font-size:17px;line-height:20px;color:#8a8a8a;font-weight:700;letter-spacing:-0.3px;">5</div>
<svg style="position:absolute;left:1017px;top:713px" width="16" height="16" viewBox="0 0 16 16"><circle cx="8" cy="8" r="8" fill="#f0f0f0"/><circle cx="8" cy="4.5" r="1.35" fill="#1b3740"/><rect x="6.8" y="6.7" width="2.5" height="6.3" fill="#1b3740"/></svg>
<svg style="position:absolute;left:1044.3px;top:712.1px" width="17.5" height="17.5" viewBox="0 0 16 16"><path fill="#f0f0f0" d="M8.00,0.60L10.41,5.58L15.89,6.34L11.90,10.17L12.88,15.61L8.00,13.00L3.12,15.61L4.10,10.17L0.11,6.34L5.59,5.58Z"/></svg></body></html>
